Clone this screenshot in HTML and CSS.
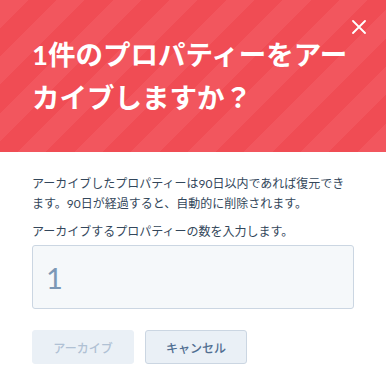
FILE: index.html
```html
<!DOCTYPE html>
<html lang="ja">
<head>
<meta charset="utf-8">
<title>アーカイブ</title>
<link rel="stylesheet" href="styles.css">
</head>
<body>
<div class="modal">
  <header class="modal-header">
    <h1 class="modal-title">1件のプロパティーをアーカイブしますか？</h1>
    <button class="close" aria-label="閉じる">
      <svg width="14" height="14" viewBox="0 0 14 14"><path d="M1 1 L13 13 M13 1 L1 13" stroke="#fff" stroke-width="1.8" stroke-linecap="round"/></svg>
    </button>
  </header>
  <div class="modal-body">
    <p class="desc">アーカイブしたプロパティーは90日以内であれば復元できます。90日が経過すると、自動的に削除されます。</p>
    <label class="label" for="count">アーカイブするプロパティーの数を入力します。</label>
    <div class="input" id="count">1</div>
    <div class="actions">
      <button class="btn btn-disabled">アーカイブ</button>
      <button class="btn btn-secondary">キャンセル</button>
    </div>
  </div>
</div>
</body>
</html>
```

FILE: styles.css
```css
* { box-sizing: border-box; }
html, body {
  margin: 0;
  padding: 0;
  background: #fff;
}
body {
  font-family: "Lato", "Noto Sans CJK JP", sans-serif;
  color: #33475b;
}
.modal {
  width: 386px;
}
.modal-header {
  position: relative;
  padding: 33px 30px 33px 32px;
  background: repeating-linear-gradient(135deg, #f2565e 0 20px, #f04c54 20px 40px);
  color: #fff;
}
.modal-title {
  margin: 0;
  font-size: 27.5px;
  line-height: 43px;
  font-weight: 700;
}
.close {
  position: absolute;
  top: 20px;
  right: 20px;
  width: 14px;
  height: 14px;
  padding: 0;
  border: 0;
  background: none;
  display: flex;
}
.modal-body {
  padding: 22px 32px 0 32px;
  display: flex;
  flex-direction: column;
}
.desc {
  margin: 0;
  font-size: 12px;
  line-height: 20px;
}
.label {
  margin-top: 8px;
  font-size: 12px;
  line-height: 20px;
}
.input {
  margin-top: 3px;
  height: 64px;
  border: 1px solid #cbd6e2;
  border-radius: 3px;
  background: #f5f8fa;
  color: #7c98b6;
  font-size: 29px;
  display: flex;
  align-items: center;
  padding: 0 13px;
}
.actions {
  margin-top: 21px;
  display: flex;
  gap: 11px;
}
.btn {
  width: 102px;
  height: 34px;
  border-radius: 3px;
  font-family: "Lato", "Noto Sans CJK JP", sans-serif;
  font-size: 12px;
  font-weight: 500;
  display: flex;
  align-items: center;
  justify-content: center;
  padding: 0;
}
.btn-disabled {
  background: #eaf0f6;
  border: 1px solid #eaf0f6;
  color: #b0c1d4;
}
.btn-secondary {
  background: #eaf0f6;
  border: 1px solid #cbd6e2;
  color: #506e91;
}
```
